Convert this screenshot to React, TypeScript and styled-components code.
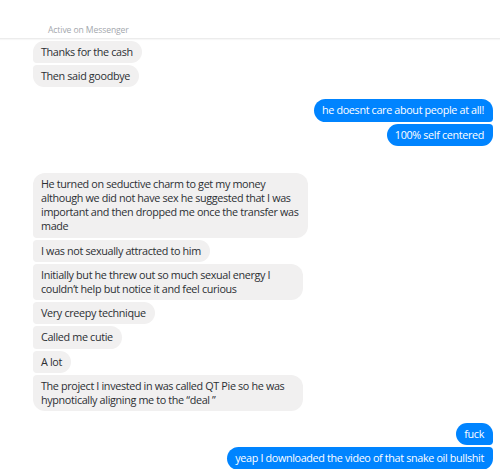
import React from "react";
import styled, { createGlobalStyle, css } from "styled-components";

type Side = "in" | "out";
type Pos = "single" | "first" | "middle" | "last";

const GlobalStyle = createGlobalStyle`
  html, body {
    margin: 0;
    padding: 0;
    background: #fff;
  }
  body {
    font-family: "Open Sans", "Noto Sans", "Liberation Sans", sans-serif;
    overflow: hidden;
  }
`;

const Page = styled.div`
  width: 500px;
  height: 469px;
  overflow: hidden;
  background: #fff;
`;

const Header = styled.div`
  height: 39px;
  box-sizing: border-box;
  padding: 16px 0 0 48px;
  border-bottom: 1px solid #ececec;
  box-shadow: 0 1px 1px rgba(0, 0, 0, 0.03);
`;

const Status = styled.span`
  font-size: 8.6px;
  letter-spacing: -0.1px;
  color: #a4a7ad;
`;

const Thread = styled.div`
  display: flex;
  flex-direction: column;
  padding: 2px 7px 0 33px;
`;

const Group = styled.div<{ $side: Side; $gap: number }>`
  display: flex;
  flex-direction: column;
  align-items: ${(p) => (p.$side === "out" ? "flex-end" : "flex-start")};
  gap: 2px;
  margin-top: ${(p) => p.$gap}px;
`;

const radius = (side: Side, pos: Pos) => {
  const big = "12px";
  const small = "4px";
  const top = pos === "middle" || pos === "last" ? small : big;
  const bottom = pos === "middle" || pos === "first" ? small : big;
  return side === "in"
    ? css`border-radius: ${top} ${big} ${big} ${bottom};`
    : css`border-radius: ${big} ${top} ${bottom} ${big};`;
};

// wrapped messages fill the full bubble width, like the real thread
const Bubble = styled.div<{ $side: Side; $pos: Pos; $wrapped: boolean }>`
  box-sizing: border-box;
  min-width: ${(p) => (p.$wrapped ? "270px" : "0")};
  white-space: pre;
  padding: 4px 9px 4px 8px;
  font-size: 10.8px;
  letter-spacing: -0.35px;
  line-height: 14.2px;
  background: ${(p) => (p.$side === "out" ? "#0084ff" : "#f1f0f0")};
  color: ${(p) => (p.$side === "out" ? "#fff" : "#2c2f33")};
  ${(p) => radius(p.$side, p.$pos)}
`;

const groups: { side: Side; gap: number; items: string[] }[] = [
  { side: "in", gap: 0, items: ["Thanks for the cash", "Then said goodbye"] },
  {
    side: "out",
    gap: 12,
    items: ["he doesnt care about people at all!", "100% self centered"],
  },
  {
    side: "in",
    gap: 27,
    items: [
      "He turned on seductive charm to get my money\nalthough we did not have sex he suggested that I was\nimportant and then dropped me once the transfer was\nmade",
      "I was not sexually attracted to him",
      "Initially but he threw out so much sexual energy I\ncouldn\u2019t help but notice it and feel curious",
      "Very creepy technique",
      "Called me cutie",
      "A lot",
      "The project I invested in was called QT Pie so he was\nhypnotically aligning me to the \u201cdeal \u201d",
    ],
  },
  {
    side: "out",
    gap: 12,
    items: ["fuck", "yeap I downloaded the video of that snake oil bullshit"],
  },
];

const posOf = (i: number, n: number): Pos =>
  n === 1 ? "single" : i === 0 ? "first" : i === n - 1 ? "last" : "middle";

export default function App() {
  return (
    <Page>
      <GlobalStyle />
      <Header>
        <Status>Active on Messenger</Status>
      </Header>
      <Thread>
        {groups.map((g, gi) => (
          <Group key={gi} $side={g.side} $gap={g.gap}>
            {g.items.map((t, i) => (
              <Bubble
                key={i}
                $side={g.side}
                $pos={posOf(i, g.items.length)}
                $wrapped={t.includes("\n")}
              >
                {t}
              </Bubble>
            ))}
          </Group>
        ))}
      </Thread>
    </Page>
  );
}
